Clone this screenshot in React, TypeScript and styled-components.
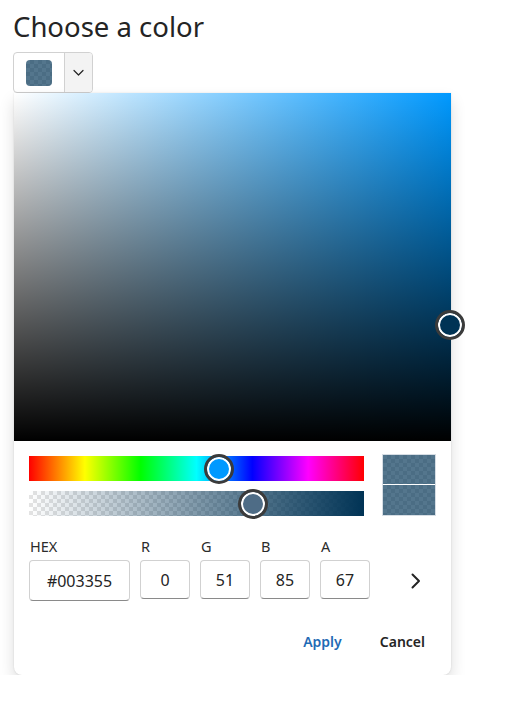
import React from "react";
import styled, { createGlobalStyle, css } from "styled-components";

const GlobalStyle = createGlobalStyle`
  html, body { margin: 0; padding: 0; background: #fff; }
  body { font-family: "Noto Sans", "Open Sans", sans-serif; color: #242424; }
  * { box-sizing: border-box; }
`;

const HUE = 204;
const COLOR = "#003355";
const ALPHA = 0.67;

const checker = css`
  background-image: conic-gradient(#e3e3e3 25%, #ffffff 0 50%, #e3e3e3 0 75%, #ffffff 0);
  background-size: 8px 8px;
`;

const Page = styled.div`
  padding: 9px 0 0 13px;
`;

const Title = styled.h1`
  margin: 0 0 7px 0;
  font-size: 27.5px;
  font-weight: 400;
  line-height: 36px;
  color: #242424;
`;

const Trigger = styled.div`
  display: flex;
  width: 80px;
  height: 41px;
  border: 1px solid #d1d1d1;
  border-radius: 4px;
  overflow: hidden;
  background: #fff;
`;

const SwatchCell = styled.div`
  width: 50px;
  display: flex;
  align-items: center;
  justify-content: center;
`;

const Swatch = styled.div`
  position: relative;
  width: 26px;
  height: 26px;
  border-radius: 4px;
  overflow: hidden;
  ${checker}
  &::after {
    content: "";
    position: absolute;
    inset: 0;
    background: rgba(0, 51, 85, ${ALPHA});
  }
`;

const ArrowCell = styled.div`
  flex: 1;
  display: flex;
  align-items: center;
  justify-content: center;
  background: #f3f3f3;
  border-left: 1px solid #d1d1d1;
`;

const Popup = styled.div`
  width: 437px;
  margin-left: 1px;
  background: #fff;
  border-radius: 0 0 8px 8px;
  box-shadow: 0 0 2px rgba(0, 0, 0, 0.12), 0 8px 16px rgba(0, 0, 0, 0.14);
`;

const ColorArea = styled.div<{ $hue: number }>`
  position: relative;
  height: 348px;
  background: linear-gradient(to top, #000, rgba(0, 0, 0, 0)),
    linear-gradient(to right, #fff, hsl(${(p) => p.$hue}, 100%, 50%));
`;

const Thumb = styled.div<{ $fill: string }>`
  position: absolute;
  width: 30px;
  height: 30px;
  border-radius: 50%;
  transform: translate(-50%, -50%);
  border: 3px solid #3b3b3b;
  box-shadow: inset 0 0 0 2px #fff;
  background: ${(p) => p.$fill};
  z-index: 2;
`;

const Body = styled.div`
  padding: 13px 15px 23px 15px;
`;

const SlidersRow = styled.div`
  display: flex;
  gap: 18px;
  align-items: flex-start;
`;

const Sliders = styled.div`
  width: 335px;
  display: flex;
  flex-direction: column;
  gap: 10px;
  padding-top: 2px;
`;

const Track = styled.div<{ $kind: "hue" | "alpha" }>`
  position: relative;
  height: 25px;
  ${(p) =>
    p.$kind === "hue"
      ? css`
          background: linear-gradient(to right, #f00, #ff0, #0f0, #0ff, #00f, #f0f, #f00);
        `
      : css`
          background-image: linear-gradient(to right, rgba(0, 51, 85, 0), ${COLOR}),
            conic-gradient(#e3e3e3 25%, #ffffff 0 50%, #e3e3e3 0 75%, #ffffff 0);
          background-size: 100% 100%, 8px 8px;
        `}
`;

const Preview = styled.div`
  width: 54px;
  display: flex;
  flex-direction: column;
  gap: 1px;
  border: 1px solid #d6dde4;
  background: #fff;
`;

const PreviewHalf = styled.div<{ $h: number }>`
  position: relative;
  height: ${(p) => p.$h}px;
  ${checker}
  &::after {
    content: "";
    position: absolute;
    inset: 0;
    background: rgba(0, 51, 85, ${ALPHA});
  }
`;

const FieldsRow = styled.div`
  display: flex;
  align-items: flex-start;
  gap: 10px;
  margin-top: 20px;
`;

const Field = styled.div`
  display: flex;
  flex-direction: column;
`;

const Label = styled.div`
  font-size: 14.5px;
  line-height: 20px;
  color: #2b2b2b;
  margin-bottom: 4px;
  padding-left: 1px;
`;

const Input = styled.div<{ $w: number; $h: number }>`
  width: ${(p) => p.$w}px;
  height: ${(p) => p.$h}px;
  border: 1px solid #d1d1d1;
  border-bottom-color: #8a8a8a;
  border-radius: 4px;
  display: flex;
  align-items: center;
  justify-content: center;
  font-size: 16px;
  color: #242424;
  background: #fff;
`;

const MoreButton = styled.div`
  flex: 1;
  align-self: stretch;
  display: flex;
  align-items: flex-end;
  justify-content: center;
  padding-bottom: 12px;
  padding-left: 16px;
`;

const Actions = styled.div`
  display: flex;
  justify-content: flex-end;
  gap: 38px;
  margin-top: 31px;
  padding-right: 11px;
`;

const ActionButton = styled.button<{ $primary?: boolean }>`
  border: none;
  background: none;
  padding: 0;
  font-family: inherit;
  font-size: 14px;
  font-weight: 600;
  line-height: 20px;
  color: ${(p) => (p.$primary ? "#1f6bb5" : "#242424")};
  cursor: pointer;
`;

const fields = [
  { label: "HEX", value: "#003355", w: 101, h: 41 },
  { label: "R", value: "0", w: 50, h: 39 },
  { label: "G", value: "51", w: 50, h: 39 },
  { label: "B", value: "85", w: 50, h: 39 },
  { label: "A", value: "67", w: 50, h: 39 },
];

export default function App() {
  const value = 0.333;
  return (
    <>
      <GlobalStyle />
      <Page>
        <Title>Choose a color</Title>
        <Trigger>
          <SwatchCell>
            <Swatch />
          </SwatchCell>
          <ArrowCell>
            <svg width="11" height="8" viewBox="0 0 11 8">
              <path d="M1 1.5 L5.5 6 L10 1.5" fill="none" stroke="#242424" strokeWidth="1.2" strokeLinecap="round" strokeLinejoin="round" />
            </svg>
          </ArrowCell>
        </Trigger>
        <Popup>
          <ColorArea $hue={HUE}>
            <Thumb $fill={COLOR} style={{ left: "calc(100% - 1.5px)", top: `${(1 - value) * 100}%` }} />
          </ColorArea>
          <Body>
            <SlidersRow>
              <Sliders>
                <Track $kind="hue">
                  <Thumb $fill={`hsl(${HUE}, 100%, 50%)`} style={{ left: `${(HUE / 360) * 100}%`, top: "50%" }} />
                </Track>
                <Track $kind="alpha">
                  <Thumb $fill="#4e6c86" style={{ left: `${ALPHA * 100}%`, top: "50%" }} />
                </Track>
              </Sliders>
              <Preview>
                <PreviewHalf $h={29} />
                <PreviewHalf $h={30} />
              </Preview>
            </SlidersRow>
            <FieldsRow>
              {fields.map((f) => (
                <Field key={f.label}>
                  <Label>{f.label}</Label>
                  <Input $w={f.w} $h={f.h}>{f.value}</Input>
                </Field>
              ))}
              <MoreButton>
                <svg width="12" height="16" viewBox="0 0 12 16">
                  <path d="M2.5 1.5 L9 8 L2.5 14.5" fill="none" stroke="#242424" strokeWidth="2" strokeLinecap="round" strokeLinejoin="round" />
                </svg>
              </MoreButton>
            </FieldsRow>
            <Actions>
              <ActionButton $primary>Apply</ActionButton>
              <ActionButton>Cancel</ActionButton>
            </Actions>
          </Body>
        </Popup>
      </Page>
    </>
  );
}
